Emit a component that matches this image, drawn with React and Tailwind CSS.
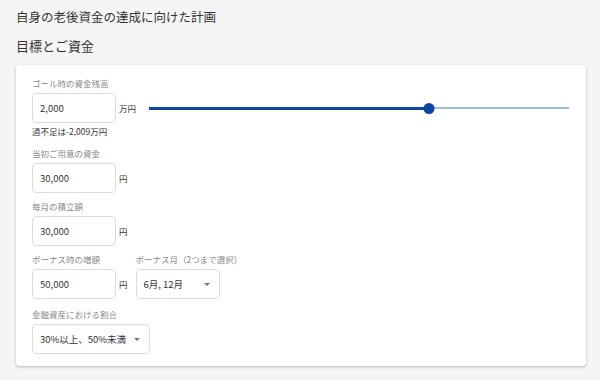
import React from "react";

const font = { fontFamily: '"Noto Sans CJK JP", "Noto Sans", sans-serif' };

function Label({ children }) {
  return <div className="text-[8.5px] leading-[14px] text-[#8a8a8a] whitespace-nowrap">{children}</div>;
}

function Box({ value, width = "w-[84px]" }) {
  return (
    <div className={`${width} h-[30px] rounded-[4px] border border-[#dcdcdc] bg-white flex items-center px-[7px] text-[9.5px] text-[#333]`}>
      {value}
    </div>
  );
}

function Select({ value, width }) {
  return (
    <div className={`${width} h-[30px] rounded-[4px] border border-[#dcdcdc] bg-white flex items-center justify-between pl-[7px] pr-[9px] text-[9.5px] text-[#333] whitespace-nowrap`}>
      <span>{value}</span>
      <span className="w-0 h-0 border-l-[3px] border-r-[3px] border-t-[3px] border-l-transparent border-r-transparent border-t-[#777]" />
    </div>
  );
}

function Unit({ children }) {
  return <span className="ml-[3px] text-[8.5px] text-[#333]">{children}</span>;
}

export default function App() {
  const pct = ((429 - 149) / (569 - 149)) * 100;

  return (
    <div className="w-[600px] h-[380px] bg-[#f5f5f5] px-4 pt-[7px]" style={font}>
      <h1 className="text-[12.5px] leading-[20px] text-[#333]">自身の老後資金の達成に向けた計画</h1>
      <h2 className="mt-[8px] text-[13px] leading-[22px] text-[#333]">目標とご資金</h2>

      <div className="mt-[8px] w-[570px] rounded-[4px] bg-white shadow-[0_1px_3px_rgba(0,0,0,0.25)] pl-4 pr-[17px] pt-[11px] pb-[12px]">
        {/* ゴール */}
        <Label>ゴール時の資金残高</Label>
        <div className="mt-[3px] flex items-center">
          <Box value="2,000" />
          <Unit>万円</Unit>
          <div className="ml-[13px] flex-1 relative h-[12px] flex items-center">
            <div className="absolute left-0 right-0 h-[2px] bg-[#9dbbe3]" />
            <div className="absolute left-0 h-[3px] bg-[#0d47a1]" style={{ width: `${pct}%` }} />
            <div
              className="absolute w-[11px] h-[11px] rounded-full bg-[#0d47a1] -translate-x-1/2"
              style={{ left: `${pct}%` }}
            />
          </div>
        </div>
        <div className="mt-[1px] text-[8.5px] leading-[14px] text-[#333]">過不足は-2,009万円</div>

        {/* 当初 */}
        <div className="mt-[8px]">
          <Label>当初ご用意の資金</Label>
          <div className="mt-[3px] flex items-center">
            <Box value="30,000" />
            <Unit>円</Unit>
          </div>
        </div>

        {/* 毎月 */}
        <div className="mt-[6px]">
          <Label>毎月の積立額</Label>
          <div className="mt-[3px] flex items-center">
            <Box value="30,000" />
            <Unit>円</Unit>
          </div>
        </div>

        {/* ボーナス */}
        <div className="mt-[6px] flex gap-[8px]">
          <div>
            <Label>ボーナス時の増額</Label>
            <div className="mt-[3px] flex items-center">
              <Box value="50,000" />
              <Unit>円</Unit>
            </div>
          </div>
          <div>
            <Label>ボーナス月（2つまで選択）</Label>
            <div className="mt-[3px]">
              <Select value="6月, 12月" width="w-[84px]" />
            </div>
          </div>
        </div>

        {/* 割合 */}
        <div className="mt-[8px]">
          <Label>金融資産における割合</Label>
          <div className="mt-[3px]">
            <Select value="30%以上、50%未満" width="w-[118px]" />
          </div>
        </div>
      </div>
    </div>
  );
}
